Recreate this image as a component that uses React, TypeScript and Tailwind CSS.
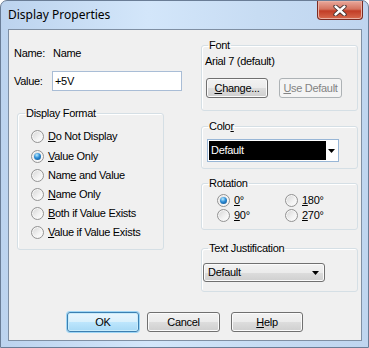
import React from 'react';

type RadioProps = { checked?: boolean; label: React.ReactNode; className?: string };

const Radio: React.FC<RadioProps> = ({ checked, label, className = 'h-[19px]' }) => (
  <div className={`flex items-center gap-[4px] ${className}`}>
    <span className="flex h-[13px] w-[13px] shrink-0 items-center justify-center rounded-full border border-[#939393] bg-[linear-gradient(135deg,#d4d4d4,#f3f3f3_60%,#ffffff)] shadow-[inset_0_0_0_1px_#f6f6f6]">
      {checked && (
        <span className="h-[7px] w-[7px] rounded-full bg-[radial-gradient(circle_at_40%_30%,#b8ecff,#2b8bd5_45%,#0e4a84)]" />
      )}
    </span>
    <span className="leading-[13px]">{label}</span>
  </div>
);

type BtnProps = { children: React.ReactNode; className?: string; primary?: boolean; disabled?: boolean };

const Button: React.FC<BtnProps> = ({ children, className = '', primary, disabled }) => {
  let look =
    'border-[#707070] bg-[linear-gradient(180deg,#f2f2f2,#ebebeb_50%,#dddddd_50%,#cfcfcf)] text-black shadow-[inset_0_0_0_1px_#fbfbfb]';
  if (primary)
    look =
      'border-[#3c7fb1] bg-[linear-gradient(180deg,#eaf6fd,#d9f0fc_50%,#bee6fd_50%,#a7d9f5)] text-black shadow-[inset_0_0_0_1px_#c8ecfb,0_0_0_1px_#9ed6f5]';
  if (disabled) look = 'border-[#adb2b5] bg-[#f4f4f4] text-[#838383]';
  return (
    <button
      className={`flex h-[20px] items-center justify-center rounded-[3px] border leading-[13px] ${look} ${className}`}
    >
      {children}
    </button>
  );
};

const Arrow = () => (
  <svg width="7" height="4" viewBox="0 0 7 4">
    <path d="M0 0h7L3.5 4z" fill="#000" />
  </svg>
);

const legend = 'ml-[6px] px-[1px] leading-[13px]';
const group = 'rounded-[3px] border border-[#d5dfe5] shadow-[inset_1px_1px_0_#ffffff]';

export default function App() {
  return (
    <div className="h-[348px] w-[369px] overflow-hidden bg-white">
      <div className="flex h-[348px] w-[369px] flex-col rounded-t-[7px] border border-[#6a7d96] bg-[linear-gradient(90deg,#bcd3ee,#d3e6fa_40%,#c7dcf3_70%,#bfd5ef)]">
        {/* title bar */}
        <div className="flex h-[28px] items-start justify-between">
          <span className="pl-[7px] pt-[6px] font-['Segoe_UI','Noto_Sans',sans-serif] text-[12px] leading-[16px] text-black">
            Display Properties
          </span>
          <div className="mr-[5px] flex h-[19px] w-[46px] items-center justify-center rounded-b-[4px] border border-t-0 border-[#7b2b22] bg-[linear-gradient(180deg,#e9a89c,#d4735f_45%,#c23d26_55%,#d86a4e)] shadow-[inset_0_0_0_1px_#eab0a3]">
            <svg width="14" height="11" viewBox="0 0 14 11">
              <path d="M2.5 1.5l9 8M11.5 1.5l-9 8" stroke="#3a2a2a" strokeWidth="4.2" strokeLinecap="round" />
              <path d="M2.5 1.5l9 8M11.5 1.5l-9 8" stroke="#ffffff" strokeWidth="2.4" strokeLinecap="round" />
            </svg>
          </div>
        </div>

        {/* client area */}
        <div className="ml-[7px] flex h-[312px] w-[354px] flex-col border border-[#7f8fa3] bg-[#f0f0f0] font-['Liberation_Sans',Arial,sans-serif] text-[11px] tracking-[-0.3px] text-black">
          <div className="flex h-[262px] items-start">
            {/* left column */}
            <div className="flex w-[192px] flex-col">
              <div className="flex pl-[5px] pt-[17px] leading-[13px]">
                <span className="w-[39px]">Name:</span>
                <span>Name</span>
              </div>
              <div className="mt-[11px] flex items-center pl-[5px]">
                <span className="w-[38px] leading-[13px]">Value:</span>
                <div className="flex h-[20px] w-[130px] items-center border border-[#a9bdd6] bg-white pl-[2px] leading-[13px]">
                  +5V
                </div>
              </div>
              <fieldset className={`ml-[8px] mt-[16px] h-[143px] w-[147px] ${group}`}>
                <legend className={`ml-[7px] px-[1px] leading-[13px]`}>Display Format</legend>
                <div className="flex flex-col pl-[13px] pt-[7px]">
                  <Radio className="mb-[1px] h-[19px]" label={<><u>D</u>o Not Display</>} />
                  <Radio checked label={<><u>V</u>alue Only</>} />
                  <Radio label={<>Nam<u>e</u> and Value</>} />
                  <Radio label={<><u>N</u>ame Only</>} />
                  <Radio label={<><u>B</u>oth if Value Exists</>} />
                  <Radio label={<><u>V</u>alue if Value Exists</>} />
                </div>
              </fieldset>
            </div>

            {/* right column */}
            <div className="flex w-[157px] flex-col">
              <fieldset className={`mt-[9px] h-[72px] ${group}`}>
                <legend className={legend}>Font</legend>
                <div className="pl-[3px] pt-[3px] leading-[13px]">Arial 7 (default)</div>
                <div className="ml-[4px] mt-[10px] flex gap-[11px]">
                  <Button className="w-[62px]">
                    <span>
                      <u>C</u>hange...
                    </span>
                  </Button>
                  <Button disabled className="w-[63px]">
                    <span>
                      <u>U</u>se Default
                    </span>
                  </Button>
                </div>
              </fieldset>

              <fieldset className={`mt-[9px] h-[49px] ${group}`}>
                <legend className={legend}>
                  Colo<u>r</u>
                </legend>
                <div className="ml-[5px] mt-[6px] flex h-[23px] w-[132px] items-center border border-[#98b6d6] bg-white p-[1px]">
                  <div className="flex h-[19px] flex-1 items-center bg-black pl-[2px] leading-[13px] text-white">
                    Default
                  </div>
                  <div className="flex w-[11px] items-center justify-center">
                    <Arrow />
                  </div>
                </div>
              </fieldset>

              <fieldset className={`mt-[8px] h-[53px] ${group}`}>
                <legend className={legend}>Rotation</legend>
                <div className="grid grid-cols-[68px_auto] pl-[15px] pt-[3px]">
                  <Radio checked className="h-[15px]" label={<><u>0</u>°</>} />
                  <Radio className="h-[15px]" label={<><u>1</u>80°</>} />
                  <Radio className="h-[15px]" label={<><u>9</u>0°</>} />
                  <Radio className="h-[15px]" label={<><u>2</u>70°</>} />
                </div>
              </fieldset>

              <fieldset className={`mt-[12px] h-[50px] ${group}`}>
                <legend className={legend}>Text Justification</legend>
                <div className="ml-[1px] mt-[8px] flex h-[19px] w-[122px] items-center justify-between rounded-[3px] border border-[#707070] bg-[linear-gradient(180deg,#f2f2f2,#ebebeb_50%,#dddddd_50%,#cfcfcf)] pl-[4px] pr-[5px] leading-[13px] shadow-[inset_0_0_0_1px_#fbfbfb]">
                  <span>Default</span>
                  <Arrow />
                </div>
              </fieldset>
            </div>
          </div>

          {/* buttons */}
          <div className="mt-[20px] flex pl-[58px]">
            <Button primary className="w-[72px]">
              OK
            </Button>
            <Button className="ml-[8px] w-[73px]">Cancel</Button>
            <Button className="ml-[11px] w-[72px]">
              <span>
                <u>H</u>elp
              </span>
            </Button>
          </div>
        </div>
        <div className="flex-1" />
      </div>
    </div>
  );
}
